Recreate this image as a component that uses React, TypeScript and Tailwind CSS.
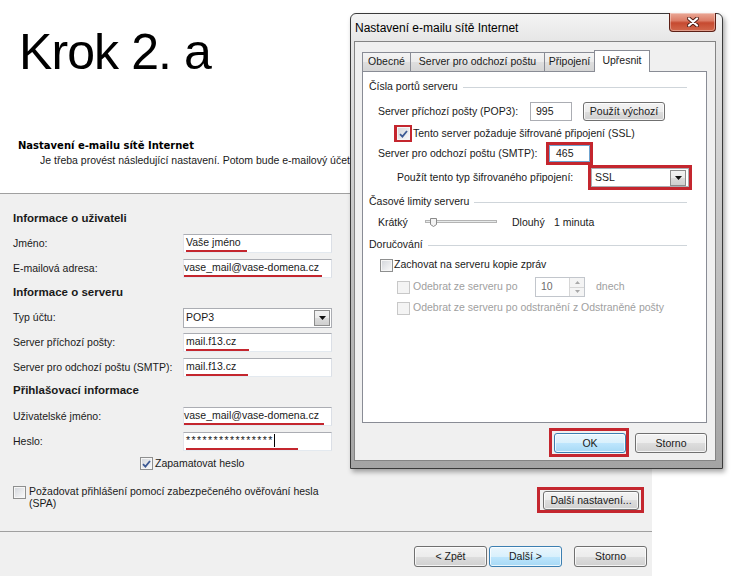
import clsx from "clsx";

const BTN_GRAY =
  "border-[#707070] bg-[linear-gradient(to_bottom,#f3f3f3_0%,#ececec_50%,#dedede_50%,#d0d0d0_100%)]";
const BTN_BLUE =
  "border-[#3c7fb1] bg-[linear-gradient(to_bottom,#eaf6fd_0%,#d9f0fc_50%,#bee6fd_50%,#a7d9f5_100%)]";

function Btn({
  children,
  primary,
  className,
}: {
  children: React.ReactNode;
  primary?: boolean;
  className?: string;
}) {
  return (
    <div
      className={clsx(
        "flex shrink-0 items-center justify-center rounded-[3px] border leading-none shadow-[inset_0_0_0_1px_rgba(255,255,255,0.75)]",
        primary ? BTN_BLUE : BTN_GRAY,
        className
      )}
    >
      {children}
    </div>
  );
}

function Check({
  checked,
  disabled,
  className,
}: {
  checked?: boolean;
  disabled?: boolean;
  className?: string;
}) {
  return (
    <span
      className={clsx(
        "flex h-[13px] w-[13px] shrink-0 items-center justify-center border",
        disabled
          ? "border-[#c8c8c8] bg-[#f4f4f4]"
          : "border-[#8e8f8f] bg-[linear-gradient(135deg,#d2d5da,#fbfbfb)] shadow-[inset_0_0_0_1px_#f6f6f6]",
        className
      )}
    >
      {checked && (
        <svg width="9" height="8" viewBox="0 0 9 8" className="overflow-visible">
          <path d="M1 4.2 L3.4 6.6 L8 1" fill="none" stroke="#3d5a94" strokeWidth="1.8" />
        </svg>
      )}
    </span>
  );
}

function DropBtn({ className }: { className?: string }) {
  return (
    <span
      className={clsx(
        "flex h-[16px] w-[16px] shrink-0 items-center justify-center border border-[#8d8d8d]",
        "bg-[linear-gradient(to_bottom,#f2f2f2_0%,#ebebeb_50%,#dcdcdc_50%,#cfcfcf_100%)]",
        className
      )}
    >
      <svg width="7" height="4" viewBox="0 0 7 4">
        <path d="M0 0h7L3.5 4z" fill="#111" />
      </svg>
    </span>
  );
}

// wizard text box with the red marker under the typed value
function TextBox({
  value,
  line,
  pad = "pl-[2px]",
  cursor,
  stars,
}: {
  value: string;
  line: string;
  pad?: string;
  cursor?: boolean;
  stars?: boolean;
}) {
  return (
    <div
      className={clsx(
        "flex h-[19px] w-[149px] shrink-0 flex-col border border-[#abadb3] border-b-[#e3e9ef] border-l-[#e2e3ea] border-r-[#dbdfe6] bg-white pt-px",
        pad
      )}
    >
      <span className="flex items-center leading-[13px] whitespace-nowrap">
        <span className={clsx(stars && "tracking-[1.4px]")}>{value}</span>
        {cursor && <span className="h-[13px] w-px bg-black" />}
      </span>
      <span className={clsx("mt-px h-[2px] bg-[#c4262e]", line)} />
    </div>
  );
}

function Field({
  label,
  children,
  className,
}: {
  label: string;
  children: React.ReactNode;
  className?: string;
}) {
  return (
    <div className={clsx("flex items-center pl-[13px]", className)}>
      <span className="w-[170px] shrink-0">{label}</span>
      {children}
    </div>
  );
}

function Section({ children, className }: { children: React.ReactNode; className?: string }) {
  return (
    <div className={clsx("h-[16px] pl-[13px] text-[11.5px] font-bold leading-[16px]", className)}>
      {children}
    </div>
  );
}

function Wizard() {
  return (
    <div className="flex h-full w-[652px] flex-col">
      <div className="h-[193px] shrink-0 overflow-hidden whitespace-nowrap">
        <h1 className="pl-[19px] pt-[27px] text-[50px] font-normal leading-none tracking-[-0.9px] text-black">
          Krok 2. a
        </h1>
        <p className="mt-[61px] pl-[18px] font-['DejaVu_Sans',sans-serif] text-[10px] font-bold leading-[15px] text-black">
          Nastavení e-mailu sítě Internet
        </p>
        <p className="ml-[40px] w-[310px] overflow-hidden leading-[15px]">
          Je třeba provést následující nastavení. Potom bude e-mailový účet připraven k použití.
        </p>
      </div>

      <div className="flex flex-1 flex-col border-t border-[#a0a0a0] bg-[#f0f0f0]">
        <div className="flex h-[337px] shrink-0 flex-col pt-[16px]">
          <Section>Informace o uživateli</Section>
          <Field label="Jméno:" className="mt-[8px]">
            <TextBox value="Vaše jméno" line="w-[61px]" />
          </Field>
          <Field label="E-mailová adresa:" className="mt-[6px]">
            <TextBox value="vase_mail@vase-domena.cz" line="w-[138px]" pad="pl-0" />
          </Field>

          <Section className="mt-[6px]">Informace o serveru</Section>
          <Field label="Typ účtu:" className="mt-[8px]">
            <div className="flex h-[20px] w-[149px] items-center border border-[#abadb3] bg-white pl-[2px] pr-px">
              <span className="flex-1">POP3</span>
              <DropBtn />
            </div>
          </Field>
          <Field label="Server příchozí pošty:" className="mt-[5px]">
            <TextBox value="mail.f13.cz" line="w-[63px]" />
          </Field>
          <Field label="Server pro odchozí poštu (SMTP):" className="mt-[6px]">
            <TextBox value="mail.f13.cz" line="w-[62px]" />
          </Field>

          <Section className="mt-[5px]">Přihlašovací informace</Section>
          <Field label="Uživatelské jméno:" className="mt-[9px]">
            <TextBox value="vase_mail@vase-domena.cz" line="w-[140px]" pad="pl-0" />
          </Field>
          <Field label="Heslo:" className="mt-[6px]">
            <TextBox value="****************" line="w-[112px]" cursor stars />
          </Field>

          <div className="mt-[6px] flex h-[13px] items-center pl-[140px]">
            <Check checked />
            <span className="ml-[2px]">Zapamatovat heslo</span>
          </div>

          <div className="mt-[15px] flex items-start justify-between">
            <div className="flex items-start pl-[13px]">
              <Check className="mt-px" />
              <span className="ml-[3px] leading-[12px]">
                Požadovat přihlášení pomocí zabezpečeného ověřování hesla
                <br />
                (SPA)
              </span>
            </div>
            <div className="mr-[8px] mt-[2px] border-[3px] border-[#c4262e] pb-0 pl-[3px] pr-[2px] pt-px">
              <Btn className="h-[19px] w-[96px]">Další nastavení...</Btn>
            </div>
          </div>
        </div>

        <div className="flex flex-1 items-start justify-end border-t border-[#a0a0a0] pr-[5px] pt-[14px]">
          <Btn className="h-[21px] w-[73px]">&lt; Zpět</Btn>
          <Btn primary className="ml-[2px] h-[21px] w-[73px]">
            Další &gt;
          </Btn>
          <Btn className="ml-[12px] h-[21px] w-[73px]">Storno</Btn>
        </div>
      </div>
    </div>
  );
}

function Group({ title, className }: { title: string; className?: string }) {
  return (
    <div className={clsx("flex h-[14px] items-center pl-[6px] pr-[19px]", className)}>
      <span className="whitespace-nowrap">{title}</span>
      <span className="ml-[5px] h-px flex-1 bg-[#cfd5da]" />
    </div>
  );
}

const TABS = [
  { label: "Obecné", w: "w-[49px]" },
  { label: "Server pro odchozí poštu", w: "w-[135px]" },
  { label: "Připojení", w: "w-[51px]" },
];

function AdvancedDialog() {
  return (
    <div className="absolute left-[350px] top-[13px] flex h-[456px] w-[373px] flex-col rounded-t-[6px] border border-[#3a3a3a] bg-[linear-gradient(to_bottom,#f4f4f4_0px,#e6e6e6_28px,#c8c8c8_200px,#a4a4a4_100%)] pb-[7px] pl-[3px] pr-[6px] shadow-[2px_3px_5px_rgba(0,0,0,0.35)]">
      <div className="flex h-[27px] shrink-0 items-start">
        <span className="ml-px mt-[6px] text-[12px] leading-[16px] text-black">
          Nastavení e-mailu sítě Internet
        </span>
        <div className="-mt-px ml-auto flex h-[19px] w-[47px] items-center justify-center rounded-b-[4px] border border-t-0 border-[#5c1f15] bg-[linear-gradient(to_bottom,#eaa897_0%,#dc7d67_42%,#c64a30_55%,#d2684c_100%)] shadow-[inset_0_0_0_1px_rgba(255,255,255,0.35)]">
          <svg width="12" height="10" viewBox="0 0 12 10">
            <path d="M2 1.5 L10 8.5 M10 1.5 L2 8.5" stroke="#4a1a12" strokeWidth="4" strokeLinecap="round" />
            <path d="M2 1.5 L10 8.5 M10 1.5 L2 8.5" stroke="#fff" strokeWidth="2.3" strokeLinecap="round" />
          </svg>
        </div>
      </div>

      <div className="flex flex-1 flex-col border border-[#848484] bg-[#f0f0f0]">
        <div className="relative z-10 -mb-px ml-[7px] mt-[8px] flex h-[22px] items-end">
          {TABS.map((t, i) => (
            <div
              key={t.label}
              className={clsx(
                "mb-px flex h-[19px] shrink-0 items-center justify-center border border-b-0 border-[#898c95] bg-[linear-gradient(to_bottom,#f4f4f4_0%,#ebebeb_50%,#dfdfdf_50%,#d5d5d5_100%)] whitespace-nowrap",
                i > 0 && "-ml-px",
                t.w
              )}
            >
              {t.label}
            </div>
          ))}
          <div className="-ml-px flex h-[22px] w-[56px] shrink-0 items-center justify-center border border-b-0 border-[#898c95] bg-white pb-[2px]">
            Upřesnit
          </div>
        </div>

        <div className="ml-[7px] flex h-[352px] w-[345px] flex-col border border-[#898c95] bg-white">
          <Group title="Čísla portů serveru" className="mt-[8px]" />

          <div className="mt-[8px] flex h-[19px] items-center pl-[15px]">
            <span className="w-[152px] shrink-0">Server příchozí pošty (POP3):</span>
            <div className="flex h-[19px] w-[42px] items-center border border-[#abadb3] bg-white pl-[5px]">995</div>
            <Btn className="ml-[11px] h-[19px] w-[82px]">Použít výchozí</Btn>
          </div>

          <div className="mt-[4px] flex h-[17px] items-center pl-[31px]">
            <span className="flex h-[17px] w-[18px] items-center justify-center border-[3px] border-[#c4262e]">
              <Check checked className="h-[11px] w-[12px] border-0" />
            </span>
            <span className="ml-px">Tento server požaduje šifrované připojení (SSL)</span>
          </div>

          <div className="flex h-[23px] items-center pl-[15px]">
            <span className="w-[168px] shrink-0">Server pro odchozí poštu (SMTP):</span>
            <span className="flex h-[23px] w-[47px] border-[3px] border-[#c4262e]">
              <span className="flex h-full w-full items-center border border-[#6fa3cf] bg-white pl-[6px]">465</span>
            </span>
          </div>

          <div className="flex h-[25px] items-center pl-[34px]">
            <span className="w-[191px] shrink-0">Použít tento typ šifrovaného připojení:</span>
            <span className="flex h-[25px] w-[104px] border-[3px] border-[#c4262e]">
              <span className="flex h-full w-full items-center border border-[#abadb3] bg-white pl-[3px] pr-[2px]">
                <span className="flex-1">SSL</span>
                <DropBtn />
              </span>
            </span>
          </div>

          <Group title="Časové limity serveru" className="mt-[5px]" />

          <div className="mt-[6px] flex h-[16px] items-center pl-[15px]">
            <span className="w-[47px] shrink-0">Krátký</span>
            <svg width="72" height="16" viewBox="0 0 72 16" className="shrink-0">
              <rect x="0.5" y="5.5" width="71" height="2" fill="#e7eaea" stroke="#b4b4b4" />
              <path d="M5.5 3.5 H11.5 V9.5 L8.5 11.5 L5.5 9.5 Z" fill="#f3f3f3" stroke="#8a8a8a" />
            </svg>
            <span className="ml-[15px] w-[42px] shrink-0">Dlouhý</span>
            <span>1 minuta</span>
          </div>

          <Group title="Doručování" className="mt-[7px]" />

          <div className="mt-[6px] flex h-[14px] items-center pl-[17px]">
            <Check />
            <span className="ml-px">Zachovat na serveru kopie zpráv</span>
          </div>

          <div className="mt-[5px] flex h-[20px] items-center pl-[34px] text-[#a0a0a0]">
            <Check disabled />
            <span className="ml-[3px] w-[122px] shrink-0">Odebrat ze serveru po</span>
            <div className="flex h-[20px] w-[50px] items-center border border-[#c2c6cc] bg-white">
              <span className="flex-1 pl-[5px] text-[#6d6d6d]">10</span>
              <span className="flex h-full w-[15px] flex-col border-l border-[#d6d6d6]">
                <span className="flex flex-1 items-center justify-center border-b border-[#d6d6d6] bg-[#f4f4f4]">
                  <svg width="5" height="3" viewBox="0 0 5 3">
                    <path d="M0 3h5L2.5 0z" fill="#a8a8a8" />
                  </svg>
                </span>
                <span className="flex flex-1 items-center justify-center bg-[#f4f4f4]">
                  <svg width="5" height="3" viewBox="0 0 5 3">
                    <path d="M0 0h5L2.5 3z" fill="#a8a8a8" />
                  </svg>
                </span>
              </span>
            </div>
            <span className="ml-[11px]">dnech</span>
          </div>

          <div className="mt-[4px] flex h-[14px] items-center pl-[34px] text-[#a0a0a0]">
            <Check disabled />
            <span className="ml-[3px]">Odebrat ze serveru po odstranění z Odstraněné pošty</span>
          </div>
        </div>

        <div className="mt-[5px] flex items-start justify-end pr-[8px]">
          <div className="h-[29px] w-[80px] border-[3px] border-[#c4262e] pl-[2px] pt-[2px]">
            <Btn primary className="h-[20px] w-[72px]">
              OK
            </Btn>
          </div>
          <Btn className="ml-[6px] mt-[5px] h-[20px] w-[72px]">Storno</Btn>
        </div>
      </div>
    </div>
  );
}

export default function App() {
  return (
    <div className="relative h-[576px] w-[753px] overflow-hidden bg-white font-['Liberation_Sans',Arial,sans-serif] text-[10.5px] text-[#1a1a1a]">
      <Wizard />
      <AdvancedDialog />
    </div>
  );
}
